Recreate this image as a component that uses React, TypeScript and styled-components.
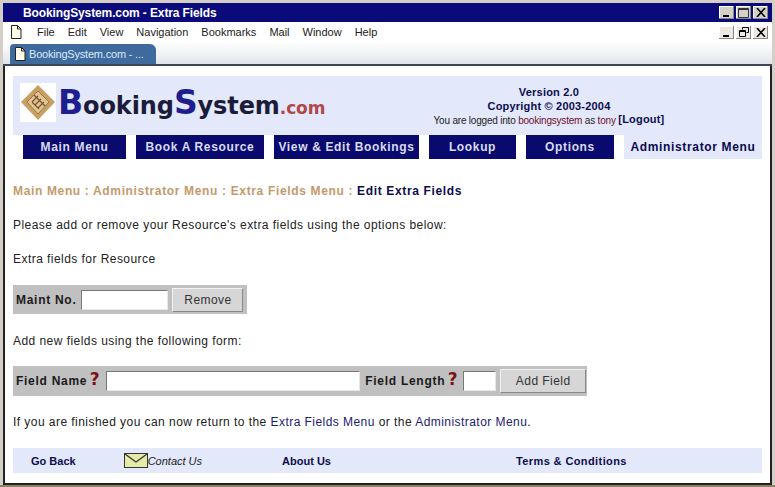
import React from "react";
import styled, { createGlobalStyle } from "styled-components";

const Global = createGlobalStyle`
  html, body { margin: 0; padding: 0; background: #d4d0c8; }
  body { font-family: "Liberation Sans", Arial, sans-serif; overflow: hidden; }
`;
const Win = styled.div`
  width: 775px; height: 487px; box-sizing: border-box; display: flex; flex-direction: column;
  background: #d4d0c8; padding-top: 3px; overflow: hidden; border-bottom: 2px solid #8a8462;
`;
const TitleBar = styled.div`
  height: 19px; flex: none; margin: 0 3px; background: #0a0a7a; display: flex; align-items: center;
  justify-content: space-between; padding: 0 4px 0 20px;
`;
const TitleText = styled.span`color: #fff; font-weight: 700; font-size: 12px; letter-spacing: -.12px;`;
const Btns = styled.div`display: flex; gap: 2px;`;
const CtlBtn = styled.div<{ $flat?: boolean }>`
  width: 15px; height: 13px; display: flex; align-items: center; justify-content: center;
  background: ${p => (p.$flat ? "#ece9e4" : "#d4d0c8")};
  box-shadow: inset -1px -1px 0 #888, inset 1px 1px 0 #fff;
  color: #000;
`;
const MenuBar = styled.div`
  height: 20px; flex: none; margin: 0 3px; background: #fff; display: flex; align-items: center;
  padding: 0 4px 0 7px;
`;
const Menus = styled.div`
  flex: 1; display: flex; gap: 13px; margin-left: 15px; font-size: 11px; color: #222; font-weight: 400;
`;
const TabBar = styled.div`
  height: 22px; flex: none; margin: 0 3px; background: linear-gradient(#ffffff, #eef0f4 60%, #dfe3ea);
  display: flex; align-items: flex-end; padding-left: 7px; border-bottom: 2px solid #3d4658;
`;
const Tab = styled.div`
  width: 146px; height: 20px; box-sizing: border-box; background: #3f6a9e; border-radius: 4px 6px 0 0;
  color: #d8ecf8; font-size: 11px; letter-spacing: -.2px; display: flex; align-items: center; gap: 3px;
  padding-left: 4px; white-space: nowrap; overflow: hidden;
`;
const Frame = styled.div`
  flex: 1; margin: 0 3px 0 3px; border-left: 2px solid #222; border-right: 2px solid #222;
  border-bottom: 2px solid #222; background: #fff; padding: 10px 8px 0 8px; min-height: 0;
  display: flex; flex-direction: column; color: #222; font-size: 12px; letter-spacing: .45px;
`;
const Banner = styled.div`
  background: #e3e8fa; height: 59px; flex: none; display: grid; grid-template-columns: 406px 1fr;
  align-items: center; box-sizing: border-box; padding: 0 7px;
`;
const Logo = styled.div`display: flex; align-items: center; gap: 2px; letter-spacing: 0; padding-bottom: 6px;`;
const LogoBox = styled.div`
  width: 36px; height: 39px; background: #fff; display: flex; align-items: center; justify-content: center; flex: none;
`;
const LogoText = styled.div`
  font-family: "DejaVu Sans", Verdana, sans-serif; font-weight: 700; color: #1c1c3a; font-size: 24px;
  line-height: 1; white-space: nowrap; letter-spacing: -.1px;
`;
const BigL = styled.span`color: #1e1e8e; font-size: 33px;`;
const Com = styled.span`color: #b04848; font-size: 17px;`;
const Info = styled.div`
  width: 246px; text-align: center; color: #0d0d4d; font-size: 11px; font-weight: 700;
  line-height: 14px; letter-spacing: .2px; padding-top: 2px;
`;
const Logged = styled.div`
  font-weight: 400; font-size: 10px; color: #222; letter-spacing: -.2px; white-space: nowrap;
`;
const Maroon = styled.span`color: #6e0f2a;`;
const Logout = styled.span`font-size: 11px; font-weight: 700; color: #0d0d4d; letter-spacing: .2px; position: relative; top: -1px;`;
const Nav = styled.div`display: flex; height: 24px; flex: none; padding-left: 10px; gap: 10px;`;
const NavItem = styled.div<{ $w: number; $active?: boolean }>`
  width: ${p => p.$w}px; display: flex; align-items: center; justify-content: center; font-weight: 700;
  font-size: 12px; letter-spacing: .65px; white-space: nowrap;
  background: ${p => (p.$active ? "#e3e8fa" : "#0a0a6e")};
  color: ${p => (p.$active ? "#0a0a50" : "#d8dcf4")};
`;
const Crumbs = styled.div`
  margin-top: 25px; height: 15px; line-height: 15px; font-weight: 700; color: #c49a6c; white-space: nowrap;
  letter-spacing: .65px;
`;
const Current = styled.span`color: #0d0d4d;`;
const Para = styled.p<{ $top: number }>`
  margin: ${p => p.$top}px 0 0; line-height: 15px; white-space: nowrap;
`;
const FormRow = styled.div<{ $w: number; $h: number; $top: number }>`
  width: ${p => p.$w}px; height: ${p => p.$h}px; margin-top: ${p => p.$top}px; background: #c0c0c0;
  display: flex; align-items: center; box-sizing: border-box; padding-left: 3px; flex: none;
`;
const Label = styled.span<{ $l?: number }>`
  font-weight: 700; color: #1a1a1a; letter-spacing: .72px; margin-left: ${p => p.$l ?? 0}px;
`;
const Input = styled.div<{ $w: number; $l: number }>`
  width: ${p => p.$w}px; height: 20px; box-sizing: border-box; background: #fff; margin-left: ${p => p.$l}px;
  border: 1px solid #e8e8e8; border-top-color: #777; border-left-color: #777; flex: none;
`;
const Button = styled.div<{ $w: number; $l: number }>`
  width: ${p => p.$w}px; height: 24px; box-sizing: border-box; margin-left: ${p => p.$l}px; flex: none;
  background: #d6d6d6; border: 1px solid #f0f0f0; border-right-color: #888; border-bottom-color: #888;
  display: flex; align-items: center; justify-content: center; color: #333;
`;
const Help = styled.span`
  font-family: "DejaVu Sans", sans-serif; font-weight: 700; font-size: 17px; line-height: 12px; color: #7a1414;
  width: 15px; text-align: center; letter-spacing: 0; flex: none; position: relative; top: -2px;
`;
const A = styled.span`color: #1c1c70;`;
const Footer = styled.div`
  margin-top: 18px; height: 25px; flex: none; background: #e3e8fa; display: flex; align-items: center;
  font-size: 11px; font-weight: 700; color: #0d0d4d; letter-spacing: 0;
`;
const FootItem = styled.div<{ $l: number; $s?: number }>`
  margin-left: ${p => p.$l}px; display: flex; align-items: center; white-space: nowrap;
  letter-spacing: ${p => p.$s ?? 0}px;
`;
const Contact = styled.span`font-weight: 400; font-style: italic; color: #222; font-size: 11px; letter-spacing: 0;`;

const Page = () => (
  <svg width="12" height="14" viewBox="0 0 12 14">
    <path d="M1.5.5h6l3.5 3.5v9.5H1.5z" fill="#fffde8" stroke="#222" />
    <path d="M7.5.5V4H11" fill="none" stroke="#222" />
  </svg>
);
const Min = () => (<svg width="9" height="9"><path d="M1 7h6v2H1z" fill="#000" /></svg>);
const Max = () => (<svg width="11" height="10"><path d="M.5.5h10v9H.5z M.5 1.5h10" fill="none" stroke="#333" /></svg>);
const Close = () => (<svg width="10" height="9"><path d="M1 0l8 9M9 0L1 9" stroke="#000" strokeWidth="1.6" /></svg>);
const Restore = () => (
  <svg width="10" height="10"><path d="M3.5 2.5V.5h6v5h-2M.5 3.5h6v6h-6z M.5 4.5h6" fill="none" stroke="#000" /></svg>
);
const Diamond = () => (
  <svg width="36" height="39" viewBox="0 0 36 39">
    <path d="M18 2l17 17-17 18L1 19z" fill="#c9a063" />
    <path d="M18 8l11 11-11 12L7 19z" fill="#e2c596" stroke="#9c7440" />
    <path d="M12 19l6-6M15 22l6-6M18 25l6-6M14 12l11 11M12 19l7 7" stroke="#7a5428" strokeWidth="1.2" fill="none" />
  </svg>
);
const Envelope = () => (
  <svg width="24" height="15" viewBox="0 0 24 15">
    <rect x=".5" y=".5" width="23" height="14" fill="#e4eba8" stroke="#333" />
    <path d="M1 1l11 8 11-8" fill="none" stroke="#333" strokeWidth="1.2" />
  </svg>
);

export default function App() {
  return (
    <Win>
      <Global />
      <TitleBar>
        <TitleText>BookingSystem.com - Extra Fields</TitleText>
        <Btns>
          <CtlBtn><Min /></CtlBtn>
          <CtlBtn><Max /></CtlBtn>
          <CtlBtn><Close /></CtlBtn>
        </Btns>
      </TitleBar>
      <MenuBar>
        <Page />
        <Menus>
          {["File", "Edit", "View", "Navigation", "Bookmarks", "Mail", "Window", "Help"].map(m => (
            <span key={m}>{m}</span>
          ))}
        </Menus>
        <Btns>
          <CtlBtn $flat><Min /></CtlBtn>
          <CtlBtn $flat><Restore /></CtlBtn>
          <CtlBtn $flat><Close /></CtlBtn>
        </Btns>
      </MenuBar>
      <TabBar>
        <Tab><Page />BookingSystem.com - ...</Tab>
      </TabBar>
      <Frame>
        <Banner>
          <Logo>
            <LogoBox><Diamond /></LogoBox>
            <LogoText><BigL>B</BigL>ooking<BigL>S</BigL>ystem<Com>.com</Com></LogoText>
          </Logo>
          <Info>
            <div>Version 2.0</div>
            <div>Copyright © 2003-2004</div>
            <Logged>
              You are logged into <Maroon>bookingsystem</Maroon> as <Maroon>tony</Maroon> <Logout>[Logout]</Logout>
            </Logged>
          </Info>
        </Banner>
        <Nav>
          <NavItem $w={103}>Main Menu</NavItem>
          <NavItem $w={128}>Book A Resource</NavItem>
          <NavItem $w={145}>View &amp; Edit Bookings</NavItem>
          <NavItem $w={87}>Lookup</NavItem>
          <NavItem $w={88}>Options</NavItem>
          <NavItem $w={138} $active>Administrator Menu</NavItem>
        </Nav>
        <Crumbs>
          Main Menu : Administrator Menu : Extra Fields Menu : <Current>Edit Extra Fields</Current>
        </Crumbs>
        <Para $top={19}>Please add or remove your Resource's extra fields using the options below:</Para>
        <Para $top={19}>Extra fields for Resource</Para>
        <FormRow $w={234} $h={29} $top={18}>
          <Label>Maint No.</Label>
          <Input $w={87} $l={5} />
          <Button $w={71} $l={4}>Remove</Button>
        </FormRow>
        <Para $top={20}>Add new fields using the following form:</Para>
        <FormRow $w={574} $h={30} $top={17}>
          <Label>Field Name</Label>
          <Help>?</Help>
          <Input $w={254} $l={4} />
          <Label $l={5}>Field Length</Label>
          <Help>?</Help>
          <Input $w={33} $l={3} />
          <Button $w={86} $l={4}>Add Field</Button>
        </FormRow>
        <Para $top={19}>
          If you are finished you can now return to the <A>Extra Fields Menu</A> or the <A>Administrator Menu</A>.
        </Para>
        <Footer>
          <FootItem $l={18}>Go Back</FootItem>
          <FootItem $l={48}><Envelope /><Contact>Contact Us</Contact></FootItem>
          <FootItem $l={80}>About Us</FootItem>
          <FootItem $l={185} $s={0.4}>Terms &amp; Conditions</FootItem>
        </Footer>
      </Frame>
    </Win>
  );
}
